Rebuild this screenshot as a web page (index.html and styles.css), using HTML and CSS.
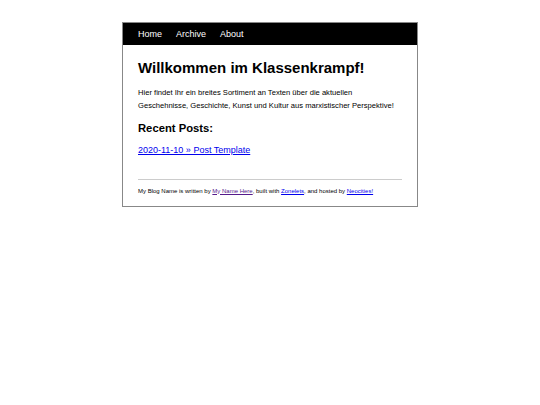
FILE: index.html
```html
<!DOCTYPE html>
<html lang="de">
<head>
<meta charset="utf-8">
<title>Klassenkrampf</title>
<link rel="stylesheet" href="styles.css">
</head>
<body>
<div class="page">
  <nav class="nav">
    <a class="nav-link" href="#">Home</a>
    <a class="nav-link" href="#">Archive</a>
    <a class="nav-link" href="#">About</a>
  </nav>
  <main class="content">
    <h1 class="title">Willkommen im Klassenkrampf!</h1>
    <p class="intro">Hier findet Ihr ein breites Sortiment an Texten über die aktuellen Geschehnisse, Geschichte, Kunst und Kultur aus marxistischer Perspektive!</p>
    <h2 class="subtitle">Recent Posts:</h2>
    <ul class="posts">
      <li><a class="post-link" href="#">2020-11-10 » Post Template</a></li>
    </ul>
    <footer class="footer">
      My Blog Name is written by <a class="visited" href="#">My Name Here</a>, built with <a href="#">Zonelets</a>, and hosted by <a href="#">Neocities!</a>
    </footer>
  </main>
</div>
</body>
</html>
```

FILE: styles.css
```css
html, body {
  margin: 0;
  padding: 0;
  background: #fff;
}

body {
  font-family: "Liberation Sans", Arial, sans-serif;
  font-size: 7.6px;
  color: #000;
}

.page {
  width: 294px;
  margin: 22px auto 0;
  border: 1px solid #888;
}

.nav {
  display: flex;
  background: #000;
  height: 22px;
  align-items: center;
  padding: 0 8px;
}

.nav-link {
  color: #fff;
  text-decoration: none;
  font-size: 9px;
  padding: 0 7px;
  line-height: 22px;
}

.content {
  padding: 0 15px 10px;
}

.title {
  font-size: 15px;
  line-height: 18px;
  font-weight: bold;
  margin: 14px 0 9px;
}

.intro {
  font-size: 7.6px;
  line-height: 13px;
  margin: 0 0 8.5px;
}

.subtitle {
  font-size: 11.25px;
  line-height: 14px;
  font-weight: bold;
  margin: 0 0 9px;
}

.posts {
  list-style: none;
  margin: 0;
  padding: 0;
  font-size: 9px;
  line-height: 13px;
}

.post-link {
  color: #0000ee;
}

.footer {
  border-top: 1px solid #ccc;
  margin-top: 22px;
  padding-top: 7px;
  font-size: 6px;
  line-height: 9px;
}

.footer a {
  color: #0000ee;
}

.footer a.visited {
  color: #551a8b;
}
```
